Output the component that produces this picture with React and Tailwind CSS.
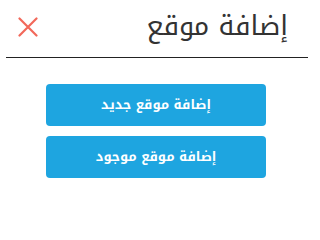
import React from "react";

export default function App() {
  return (
    <div
      dir="rtl"
      className="w-[314px] h-[210px] bg-white"
      style={{ fontFamily: '"Noto Kufi Arabic", "Noto Sans Arabic", "DejaVu Sans", sans-serif' }}
    >
      {/* Header */}
      <div className="mx-[6px] h-[58px] border-b border-[#222] flex items-center justify-between pr-[20px] pl-[12px]">
        <h1 className="text-[27px] leading-none text-[#333] font-normal pb-[4px]">إضافة موقع</h1>
        <button className="w-[20px] h-[20px] mb-[4px] text-[#f2685a]" aria-label="close">
          <svg viewBox="0 0 20 20" width="20" height="20" stroke="currentColor" strokeWidth="2.2" strokeLinecap="round">
            <path d="M1.5 1.5 L18.5 18.5 M18.5 1.5 L1.5 18.5" />
          </svg>
        </button>
      </div>

      {/* Actions */}
      <div className="flex flex-col gap-[10px] mt-[26px] mr-[48px] ml-[46px]">
        <button className="h-[42px] rounded-[4px] bg-[#1ea5e0] text-white text-[13px] font-bold">
          إضافة موقع جديد
        </button>
        <button className="h-[42px] rounded-[4px] bg-[#1ea5e0] text-white text-[13px] font-bold">
          إضافة موقع موجود
        </button>
      </div>
    </div>
  );
}
